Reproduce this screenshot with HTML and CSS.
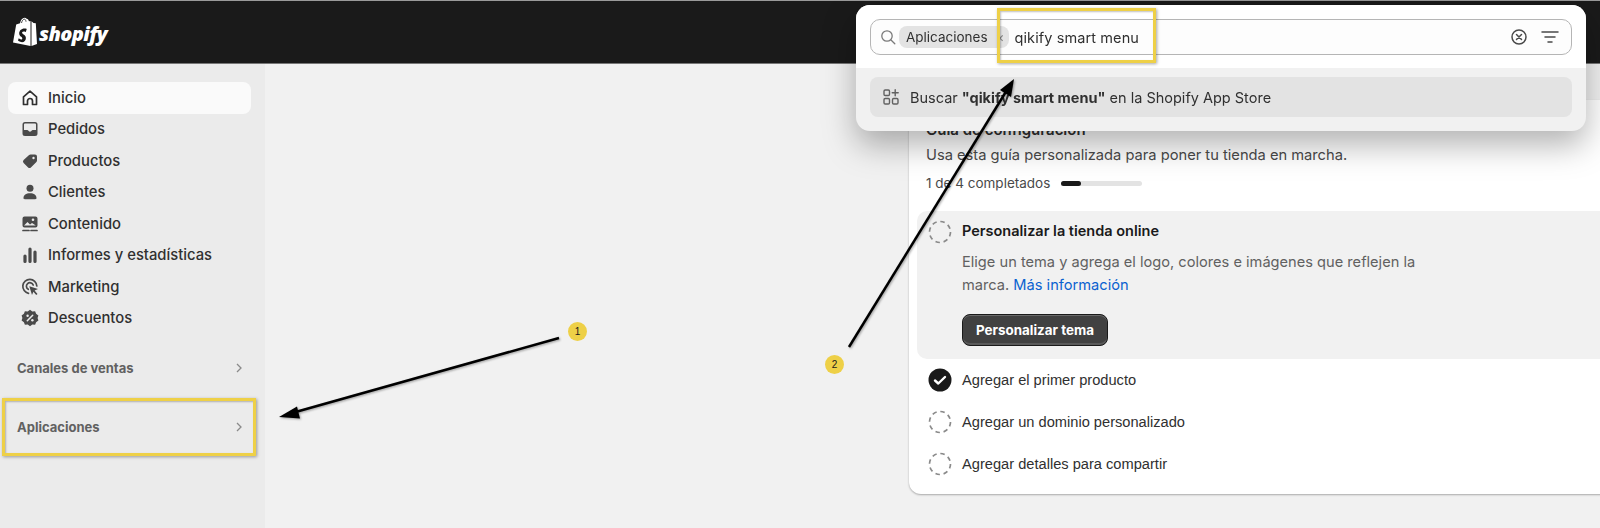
FILE: index.html
```html
<!DOCTYPE html>
<html lang="es">
<head>
<meta charset="utf-8">
<title>Shopify</title>
<link rel="stylesheet" href="styles.css">
</head>
<body>
<header class="topbar">
  <div class="logo">
    <svg class="logo-bag" width="25" height="30" viewBox="0 0 25 30"><path d="M1 25.500 4.200 7.500 8 6.200C8.600 3 10.500.8 12.600.8c.9 0 1.500.4 2 1 1 0 1.900.8 2.400 2.500l1.500-.4V29L1 25.500Z" fill="#fff"/><path d="M19.500 4.200 21.500 6l2.300.2L25 27l-5.500 2V4.200Z" fill="#fff"/><path d="M14.600 12.500l-.8 2.500s-1-.5-2-.5c-1.600 0-1.700 1-1.700 1.300 0 1.400 3.800 1.900 3.800 5.200 0 2.600-1.700 4.200-3.900 4.200-2.600 0-4-1.600-4-1.600l.7-2.400s1.400 1.200 2.500 1.200c.8 0 1.100-.6 1.100-1 0-1.800-3.100-1.900-3.100-4.900 0-2.500 1.800-5 5.500-5 1.400 0 2 .4 2 .4l-.1.600Z" fill="#1a1a1a"/><path d="M9.500 6c.4-2 1.500-3.700 3-3.800.9 0 1.300 1 1.500 2.500" fill="none" stroke="#1a1a1a" stroke-width=".8"/></svg>
    <span class="logo-text">shopify</span>
  </div>
</header>

<div class="shell">
  <nav class="sidebar">
    <a class="nav-item active">
      <svg class="nav-icon" viewBox="0 0 20 20"><path d="M3.500 16.500V8.800L10 3.200l6.500 5.600v7.700h-4v-3.500a2.500 2.500 0 0 0-5 0v3.500h-4Z" fill="none" stroke="#303030" stroke-width="1.700" stroke-linejoin="round"/></svg>
      <span>Inicio</span>
    </a>
    <a class="nav-item">
      <svg class="nav-icon" viewBox="0 0 20 20"><path d="M5 3h10a2.500 2.500 0 0 1 2.500 2.500v9A2.500 2.500 0 0 1 15 17H5a2.500 2.500 0 0 1-2.500-2.500v-9A2.500 2.500 0 0 1 5 3Zm-1 7v1h3.300a1 1 0 0 1 .9.600 2 2 0 0 0 3.600 0 1 1 0 0 1 .9-.6H16V5.500a1 1 0 0 0-1-1H5a1 1 0 0 0-1 1V10Z" fill="#4a4a4a"/></svg>
      <span>Pedidos</span>
    </a>
    <a class="nav-item">
      <svg class="nav-icon" viewBox="0 0 20 20"><path d="M11 3.500h4A2 2 0 0 1 17 5.500v4a2 2 0 0 1-.6 1.400l-5.500 5.500a2 2 0 0 1-2.800 0l-4.500-4.500a2 2 0 0 1 0-2.800L9.100 4.100A2 2 0 0 1 11 3.500Z" fill="#4a4a4a"/><circle cx="13.500" cy="7" r="1.200" fill="#ebebeb"/></svg>
      <span>Productos</span>
    </a>
    <a class="nav-item">
      <svg class="nav-icon" viewBox="0 0 20 20"><circle cx="10" cy="6.300" r="3.500" fill="#4a4a4a"/><path d="M3.500 16c0-3 2.500-4.800 6.500-4.800s6.500 1.800 6.500 4.800c0 .8-.5 1.200-1.300 1.200H4.800c-.8 0-1.300-.4-1.300-1.200Z" fill="#4a4a4a"/></svg>
      <span>Clientes</span>
    </a>
    <a class="nav-item">
      <svg class="nav-icon" viewBox="0 0 20 20"><path d="M4.500 2.500h11A2 2 0 0 1 17.500 4.500v7a2 2 0 0 1-2 2h-11a2 2 0 0 1-2-2v-7a2 2 0 0 1 2-2Z" fill="#4a4a4a"/><path d="M4 11.500 7.500 8l2.500 2.500L12 9l3.800 2.500Z" fill="#ebebeb"/><circle cx="13" cy="5.800" r="1.300" fill="#ebebeb"/><path d="M3 16.500h6M11 16.500h6" stroke="#4a4a4a" stroke-width="1.700" stroke-linecap="round"/></svg>
      <span>Contenido</span>
    </a>
    <a class="nav-item">
      <svg class="nav-icon" viewBox="0 0 20 20"><path d="M5 11v5.500M10 4v12.500M15 7v9.500" stroke="#4a4a4a" stroke-width="3.200" stroke-linecap="round"/></svg>
      <span>Informes y estadísticas</span>
    </a>
    <a class="nav-item">
      <svg class="nav-icon" viewBox="0 0 20 20"><path d="M8.500 16.300A7 7 0 1 1 16.800 9" fill="none" stroke="#4a4a4a" stroke-width="1.700" stroke-linecap="round"/><path d="M8.300 12.300A3.500 3.500 0 1 1 13.200 8" fill="none" stroke="#4a4a4a" stroke-width="1.700" stroke-linecap="round"/><path d="M9.300 9.300 18 12l-3.400 1.400L17.500 17l-1.300 1-2.800-3.300L12 18Z" fill="#4a4a4a"/></svg>
      <span>Marketing</span>
    </a>
    <a class="nav-item">
      <svg class="nav-icon" viewBox="0 0 20 20"><path d="M10 1.800l2.300 1.600 2.800-.2 1 2.600 2.300 1.700-.8 2.500.8 2.500-2.300 1.700-1 2.600-2.800-.2L10 18.200l-2.300-1.600-2.800.2-1-2.600-2.300-1.700.8-2.500-.8-2.500 2.300-1.700 1-2.600 2.800.2Z" fill="#4a4a4a"/><path d="M7.300 12.800l5.400-5.600" stroke="#ebebeb" stroke-width="1.500" stroke-linecap="round"/><circle cx="7.600" cy="7.700" r="1.200" fill="#ebebeb"/><circle cx="12.400" cy="12.300" r="1.200" fill="#ebebeb"/></svg>
      <span>Descuentos</span>
    </a>

    <div class="nav-section first">
      <span>Canales de ventas</span>
      <svg class="chevron" width="12" height="12" viewBox="0 0 12 12"><path d="M4 2l4 4-4 4" fill="none" stroke="#8a8a8a" stroke-width="1.300"/></svg>
    </div>
    <div class="nav-section second">
      <span>Aplicaciones</span>
      <svg class="chevron" width="12" height="12" viewBox="0 0 12 12"><path d="M4 2l4 4-4 4" fill="none" stroke="#8a8a8a" stroke-width="1.300"/></svg>
    </div>
  </nav>

  <main class="main">
    <section class="card">
      <h2 class="card-title">Guía de configuración</h2>
      <p class="card-desc">Usa esta guía personalizada para poner tu tienda en marcha.</p>
      <div class="progress-row">
        <span>1 de 4 completados</span>
        <div class="progress"><div class="progress-fill"></div></div>
      </div>

      <div class="task-open">
        <svg class="dash" viewBox="0 0 24 24"><circle cx="12" cy="12" r="10.500" fill="none" stroke="#8a8a8a" stroke-width="1.700" stroke-dasharray="4.500 3.750"/></svg>
        <div class="task-body">
          <h3 class="task-title">Personalizar la tienda online</h3>
          <p class="task-desc">Elige un tema y agrega el logo, colores e imágenes que reflejen la marca. <a class="link">Más información</a></p>
          <button class="btn">Personalizar tema</button>
        </div>
      </div>

      <div class="task">
        <svg class="dash" viewBox="0 0 24 24"><circle cx="12" cy="12" r="11.500" fill="#1a1a1a"/><path d="M7 12.500l3.300 3L17 9" fill="none" stroke="#fff" stroke-width="2.400" stroke-linecap="round" stroke-linejoin="round"/></svg>
        <span>Agregar el primer producto</span>
      </div>
      <div class="task">
        <svg class="dash" viewBox="0 0 24 24"><circle cx="12" cy="12" r="10.500" fill="none" stroke="#8a8a8a" stroke-width="1.700" stroke-dasharray="4.500 3.750"/></svg>
        <span>Agregar un dominio personalizado</span>
      </div>
      <div class="task">
        <svg class="dash" viewBox="0 0 24 24"><circle cx="12" cy="12" r="10.500" fill="none" stroke="#8a8a8a" stroke-width="1.700" stroke-dasharray="4.500 3.750"/></svg>
        <span>Agregar detalles para compartir</span>
      </div>
    </section>
  </main>
</div>

<div class="popup">
  <div class="popup-head">
    <div class="search">
      <svg width="16" height="16" viewBox="0 0 16 16"><circle cx="7" cy="7" r="5.200" fill="none" stroke="#7a7a7a" stroke-width="1.300"/><path d="M11 11l3.800 3.800" stroke="#7a7a7a" stroke-width="1.300" stroke-linecap="round"/></svg>
      <span class="chip">Aplicaciones<span class="chip-x">×</span></span>
      <span class="query">qikify smart menu</span>
      <span class="spacer"></span>
      <svg class="clear" width="18" height="18" viewBox="0 0 18 18"><circle cx="9" cy="9" r="7" fill="none" stroke="#4a4a4a" stroke-width="1.500"/><path d="M6.500 6.500l5 5M11.500 6.500l-5 5" stroke="#4a4a4a" stroke-width="1.500" stroke-linecap="round"/></svg>
      <svg width="18" height="14" viewBox="0 0 18 14"><path d="M1 2h16M4 7h10M7 12h4" stroke="#4a4a4a" stroke-width="1.500" stroke-linecap="round"/></svg>
    </div>
  </div>
  <div class="popup-body">
    <div class="result">
      <svg width="16" height="16" viewBox="0 0 16 16"><g fill="none" stroke="#616161" stroke-width="1.400"><rect x="1" y="1" width="5.500" height="5.500" rx="1.200"/><rect x="1" y="9.500" width="5.500" height="5.500" rx="1.200"/><rect x="9.500" y="9.500" width="5.500" height="5.500" rx="1.200"/><path d="M12.200 .8v6M9.200 3.800h6" stroke-linecap="round"/></g></svg>
      <span>Buscar <b>"qikify smart menu"</b> en la Shopify App Store</span>
    </div>
  </div>
</div>

<div class="mark mark-apps"></div>
<div class="mark mark-query"></div>
<svg class="arrows" width="1600" height="528" viewBox="0 0 1600 528">
  <defs><filter id="sh" x="-10%" y="-10%" width="120%" height="120%"><feDropShadow dx="1" dy="1" stdDeviation="1" flood-color="#000" flood-opacity=".35"/></filter></defs>
  <g filter="url(#sh)">
    <path d="M559 338 292 413" stroke="#000" stroke-width="2.500"/>
    <path d="M279 417 297 406.500 300 418.500Z" fill="#000"/>
    <path d="M849 347 1007 90" stroke="#000" stroke-width="2.500"/>
    <path d="M1014 79 1011 97 1000 90Z" fill="#000"/>
  </g>
</svg>
<div class="badge badge-one">1</div>
<div class="badge badge-two">2</div>
</body>
</html>
```

FILE: styles.css
```css
* { box-sizing: border-box; }

html, body {
  margin: 0;
  height: 528px;
  overflow: hidden;
}

body {
  position: relative;
  display: flex;
  flex-direction: column;
  width: 1600px;
  font-family: Inter, "Liberation Sans", sans-serif;
  color: #303030;
  background: #f1f1f1;
}

.topbar {
  flex: 0 0 64px;
  display: flex;
  align-items: center;
  padding: 0 0 0 12px;
  background: #1a1a1a;
  border-top: 1px solid #9a9a9a;
  border-bottom: 1px solid #777;
}

.logo {
  display: flex;
  align-items: center;
  gap: 2px;
  margin-top: 0;
}

.logo-text {
  color: #fff;
  font-family: "Open Sans", sans-serif;
  font-size: 20px;
  font-weight: 800;
  font-style: italic;
  letter-spacing: -.6px;
  margin-top: 3px;
}

.shell {
  flex: 1;
  display: flex;
  min-height: 0;
}

.sidebar {
  flex: 0 0 265px;
  padding: 18px 14px 0 8px;
  background: #ebebeb;
}

.nav-item {
  display: flex;
  align-items: center;
  gap: 8px;
  height: 31.5px;
  padding-left: 12px;
  border-radius: 8px;
  font-size: 14.800px;
  font-weight: 450;
  color: #303030;
}

.nav-item.active {
  background: #fafafa;
}

.nav-icon {
  width: 20px;
  height: 20px;
  flex: none;
}

.nav-section {
  display: flex;
  align-items: center;
  justify-content: space-between;
  padding: 0 6px 0 9px;
  font-size: 13px;
  font-weight: 700;
  color: #616161;
  height: 20px;
}

.nav-section.first { margin-top: 24px; }
.nav-section.second { margin-top: 39px; }

.main {
  flex: 1;
  min-width: 0;
  overflow: hidden;
  padding-top: 36px;
  padding-left: 644px;
}

.card {
  width: 720px;
  height: 394px;
  padding: 20px 0 0 8px;
  background: #fff;
  border-radius: 12px;
  box-shadow: 0 1px 2px rgba(0, 0, 0, .3);
}

.card-title {
  margin: 0 0 0 9px;
  font-size: 15px;
  line-height: 20px;
  font-weight: 600;
  color: #303030;
}

.card-desc {
  margin: 4px 0 0 9px;
  font-size: 14.680px;
  line-height: 22px;
  color: #4a4a4a;
}

.progress-row {
  display: flex;
  align-items: center;
  gap: 11px;
  margin: 7px 0 0 9px;
  height: 20px;
  font-size: 13.500px;
  color: #4a4a4a;
}

.progress {
  width: 81px;
  height: 5px;
  border-radius: 3px;
  background: #e3e3e3;
}

.progress-fill {
  width: 20px;
  height: 5px;
  border-radius: 3px;
  background: #1a1a1a;
}

.task-open {
  display: flex;
  gap: 10px;
  height: 148px;
  margin-top: 18px;
  padding: 9px 0 0 11px;
  background: #f1f1f1;
  border-radius: 10px 0 0 10px;
}

.dash {
  flex: none;
  width: 24px;
  height: 24px;
}

.task-title {
  margin: 0;
  font-size: 14.500px;
  line-height: 22px;
  font-weight: 600;
  color: #1a1a1a;
}

.task-desc {
  width: 470px;
  margin: 9px 0 0;
  font-size: 14.630px;
  line-height: 23px;
  color: #616161;
}

.link { color: #0a62d0; }

.btn {
  display: block;
  width: 146px;
  height: 32px;
  margin-top: 17px;
  padding: 0;
  border: 1px solid #1a1a1a;
  border-radius: 8px;
  background: #414141;
  box-shadow: inset 0 1px 0 #6a6a6a, inset 0 -2px 0 #5a5a5a;
  color: #fff;
  font: 700 13.400px Inter, "Liberation Sans", sans-serif;
}

.task {
  display: flex;
  align-items: center;
  gap: 10px;
  height: 42px;
  padding-left: 11px;
  font-family: "Liberation Sans", sans-serif;
  font-size: 14.650px;
  color: #303030;
}

.popup {
  position: absolute;
  left: 856px;
  top: 5px;
  width: 730px;
  height: 126px;
  border-radius: 14px;
  overflow: hidden;
  background: #f1f1f1;
  filter: drop-shadow(0 14px 16px rgba(0, 0, 0, .3));
}

.popup-head {
  height: 63px;
  padding: 14px 14px 0;
  background: #fff;
}

.search {
  display: flex;
  align-items: center;
  height: 36px;
  padding: 0 12px 0 9px;
  background: #fdfdfd;
  border: 1px solid #b5b5b5;
  border-radius: 10px;
  font-size: 14.500px;
  color: #303030;
}

.chip {
  display: inline-flex;
  align-items: center;
  height: 22px;
  margin-left: 3px;
  padding: 0 4px 0 7px;
  background: #e3e3e3;
  border-radius: 8px;
  font-size: 13.500px;
}

.chip-x {
  margin-left: 8px;
  color: #8a8a8a;
}

.query {
  margin-left: 6px;
  letter-spacing: .1px;
}

.spacer { flex: 1; }

.clear { margin-right: 13px; }

.popup-body {
  padding: 9px 14px 0;
}

.result {
  display: flex;
  align-items: center;
  gap: 11px;
  height: 40px;
  padding-left: 13px;
  background: #e3e3e3;
  border-radius: 8px;
  font-size: 14.500px;
  color: #303030;
}

.result b { font-weight: 700; }

.mark {
  position: absolute;
  border: 3px solid #eed047;
  box-shadow: 1px 1px 3px rgba(0, 0, 0, .35), inset 1px 1px 2px rgba(0, 0, 0, .25);
}

.mark-apps {
  left: 2px;
  top: 398px;
  width: 254px;
  height: 58px;
}

.mark-query {
  left: 997px;
  top: 8px;
  width: 159px;
  height: 55px;
}

.arrows {
  position: absolute;
  left: 0;
  top: 0;
}

.badge {
  position: absolute;
  width: 19px;
  height: 19px;
  border-radius: 50%;
  background: #eed047;
  color: #1a1a1a;
  font: 10px/19px "Liberation Sans", sans-serif;
  text-align: center;
}

.badge-one { left: 568px; top: 322px; }
.badge-two { left: 825px; top: 355px; }
```
